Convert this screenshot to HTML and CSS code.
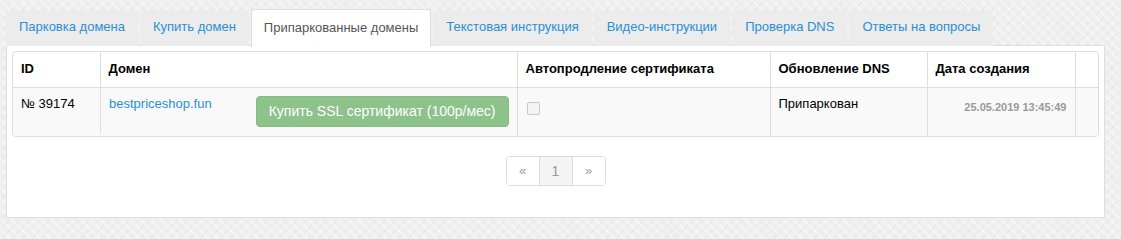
FILE: index.html
```html
<!DOCTYPE html>
<html lang="ru">
<head>
<meta charset="utf-8">
<title>Припаркованные домены</title>
<link rel="stylesheet" href="styles.css">
</head>
<body>
<div class="page">
  <ul class="tabs">
    <li class="tab"><a href="#">Парковка домена</a></li>
    <li class="tab"><a href="#">Купить домен</a></li>
    <li class="tab active"><a href="#">Припаркованные домены</a></li>
    <li class="tab"><a href="#">Текстовая инструкция</a></li>
    <li class="tab"><a href="#">Видео-инструкции</a></li>
    <li class="tab"><a href="#">Проверка DNS</a></li>
    <li class="tab"><a href="#">Ответы на вопросы</a></li>
  </ul>
  <div class="panel">
    <div class="table-wrap">
      <table class="grid">
        <colgroup>
          <col class="c-id"><col class="c-domain"><col class="c-auto"><col class="c-dns"><col class="c-date"><col class="c-empty">
        </colgroup>
        <thead>
          <tr>
            <th>ID</th>
            <th>Домен</th>
            <th>Автопродление сертификата</th>
            <th>Обновление DNS</th>
            <th>Дата создания</th>
            <th></th>
          </tr>
        </thead>
        <tbody>
          <tr>
            <td>№ 39174</td>
            <td class="domain-cell">
              <a class="domain" href="#">bestpriceshop.fun</a>
              <button class="btn-buy" disabled>Купить SSL сертификат (100р/мес)</button>
            </td>
            <td><span class="check"></span></td>
            <td>Припаркован</td>
            <td class="date">25.05.2019 13:45:49</td>
            <td></td>
          </tr>
        </tbody>
      </table>
    </div>
    <div class="pager-row">
      <ul class="pager">
        <li class="pg">«</li>
        <li class="pg current">1</li>
        <li class="pg">»</li>
      </ul>
    </div>
  </div>
</div>
</body>
</html>
```
FILE: styles.css
```css
html, body {
  margin: 0;
  padding: 0;
}
body {
  font-family: "Liberation Sans", Arial, sans-serif;
  font-size: 13px;
  line-height: 18px;
  color: #000;
  background-color: #efefef;
  background-image:
    repeating-linear-gradient(45deg, rgba(255,255,255,0.35) 0 2px, transparent 2px 7px),
    repeating-linear-gradient(-45deg, rgba(0,0,0,0.018) 0 2px, transparent 2px 7px);
  height: 239px;
  overflow: hidden;
}
.page {
  padding: 9px 16px 0 6px;
}
.tabs {
  list-style: none;
  margin: 0;
  padding: 0;
  display: flex;
  gap: 2px;
  height: 36px;
  position: relative;
  z-index: 1;
}
.tab {
  display: flex;
}
.tab a {
  display: flex;
  align-items: center;
  padding: 0 13px 2px 13px;
  color: #2a8fd6;
  text-decoration: none;
  background: #ececec;
  border-radius: 4px 4px 0 0;
  height: 34px;
  margin-top: 1px;
}
.tab.active a {
  background: #fff;
  color: #555;
  border: 1px solid #ddd;
  border-bottom: none;
  padding: 0 12px 2px 12px;
  height: 35px;
  margin-top: 0;
}
.panel {
  background: #fff;
  border: 1px solid #ddd;
  padding: 5px 5px 31px 5px;
}
.table-wrap {
  border: 1px solid #ddd;
  border-radius: 4px;
  overflow: hidden;
}
.grid {
  width: 100%;
  border-collapse: collapse;
  table-layout: fixed;
}
.c-id { width: 87px; }
.c-domain { width: 417px; }
.c-auto { width: 253px; }
.c-dns { width: 157px; }
.c-date { width: 148px; }
.c-empty { width: auto; }
.grid th, .grid td {
  text-align: left;
  vertical-align: top;
  padding: 8px 8px 8px 8px;
  border-left: 1px solid #ddd;
}
.grid th:first-child, .grid td:first-child {
  border-left: none;
}
.grid th {
  font-weight: bold;
  height: 19px;
  border-bottom: 1px solid #ddd;
}
.grid tbody tr {
  background: #f9f9f9;
}
.grid td {
  padding-top: 7px;
  height: 30px;
}
.domain-cell {
  display: block;
}
.domain {
  color: #2a8fd6;
  text-decoration: none;
}
.btn-buy {
  float: right;
  margin-top: 1px;
  font-family: "Liberation Sans", Arial, sans-serif;
  font-size: 14px;
  line-height: 20px;
  color: #fff;
  background: #8dc28b;
  border: 1px solid #84bd82;
  border-radius: 4px;
  padding: 4px 12px 5px 12px;
  cursor: not-allowed;
}
.check {
  display: inline-block;
  width: 11px;
  height: 11px;
  margin-top: 7px;
  margin-left: 1px;
  border: 1px solid #c8c8c8;
  border-radius: 2px;
  background: #f4f4f4;
}
.date {
  text-align: right !important;
  font-size: 11px;
  font-weight: bold;
  color: #999;
}
.date {
  padding-top: 10px !important;
}
.pager-row {
  display: flex;
  justify-content: center;
  margin-top: 19px;
}
.pager {
  list-style: none;
  margin: 0;
  padding: 0;
  display: flex;
  border: 1px solid #ddd;
  border-radius: 4px;
  overflow: hidden;
}
.pg {
  width: 32px;
  height: 28px;
  display: flex;
  align-items: center;
  justify-content: center;
  color: #999;
  font-size: 13px;
  background: #fff;
  border-left: 1px solid #ddd;
}
.pg:first-child {
  border-left: none;
}
.pg.current {
  background: #f4f4f4;
  font-size: 14px;
}
```
